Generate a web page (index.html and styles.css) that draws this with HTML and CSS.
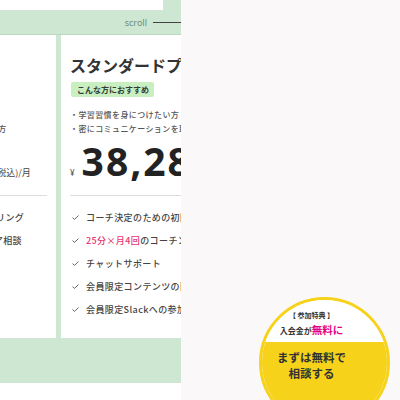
FILE: index.html
```html
<!DOCTYPE html>
<html lang="ja">
<head>
<meta charset="utf-8">
<title>プラン</title>
<link rel="stylesheet" href="styles.css">
</head>
<body>
<div class="page">
  <main class="plans">
    <div class="plans-bg">
      <div class="prev-card"></div>
      <div class="scroll-hint"><span>scroll</span><i class="scroll-line"></i></div>
      <div class="cards">
        <article class="card">
          <h2 class="card-title">ライトプラン</h2>
          <p class="tag">こんな方におすすめ</p>
          <ul class="bullets">
            <li>・まずは気軽に始めたい方</li>
            <li>・自分のペースでしっかり学習を進めたい方</li>
          </ul>
          <div class="price"><span class="yen">¥</span><span class="amount">19,800</span><span class="unit">円(税込)/月</span></div>
          <ul class="features">
            <li><svg class="check" viewBox="0 0 7 5"><polyline points="0.5,2.6 2.5,4.4 6.5,0.5"/></svg><span>コーチ決定のための初回カウンセリング</span></li>
            <li><svg class="check" viewBox="0 0 7 5"><polyline points="0.5,2.6 2.5,4.4 6.5,0.5"/></svg><span>30分×月2回のオンラインキャリア相談</span></li>
            <li><svg class="check" viewBox="0 0 7 5"><polyline points="0.5,2.6 2.5,4.4 6.5,0.5"/></svg><span>チャットサポート</span></li>
            <li><svg class="check" viewBox="0 0 7 5"><polyline points="0.5,2.6 2.5,4.4 6.5,0.5"/></svg><span>会員限定コンテンツ</span></li>
            <li><svg class="check" viewBox="0 0 7 5"><polyline points="0.5,2.6 2.5,4.4 6.5,0.5"/></svg><span>会員限定Slack</span></li>
          </ul>
        </article>
        <article class="card">
          <h2 class="card-title">スタンダードプラン</h2>
          <p class="tag">こんな方におすすめ</p>
          <ul class="bullets">
            <li>・学習習慣を身につけたい方</li>
            <li>・密にコミュニケーションを取りたい方</li>
          </ul>
          <div class="price"><span class="yen">¥</span><span class="amount">38,280</span><span class="unit">円(税込)/月</span></div>
          <ul class="features">
            <li><svg class="check" viewBox="0 0 7 5"><polyline points="0.5,2.6 2.5,4.4 6.5,0.5"/></svg><span>コーチ決定のための初回カウンセリング</span></li>
            <li><svg class="check" viewBox="0 0 7 5"><polyline points="0.5,2.6 2.5,4.4 6.5,0.5"/></svg><span><em class="pink">25分×月4回</em>のコーチング</span></li>
            <li><svg class="check" viewBox="0 0 7 5"><polyline points="0.5,2.6 2.5,4.4 6.5,0.5"/></svg><span>チャットサポート</span></li>
            <li><svg class="check" viewBox="0 0 7 5"><polyline points="0.5,2.6 2.5,4.4 6.5,0.5"/></svg><span>会員限定コンテンツの閲覧</span></li>
            <li><svg class="check" viewBox="0 0 7 5"><polyline points="0.5,2.6 2.5,4.4 6.5,0.5"/></svg><span>会員限定Slackへの参加</span></li>
          </ul>
        </article>
      </div>
    </div>
  </main>
  <aside class="side"></aside>
</div>
<a class="cta" href="#">
  <span class="cta-top">
    <span class="cta-label">【 参加特典 】</span>
    <span class="cta-benefit">入会金が<em>無料に</em></span>
  </span>
  <span class="cta-bottom">まずは無料で<br>相談する</span>
</a>
</body>
</html>
```
FILE: styles.css
```css
html, body {
  margin: 0;
  padding: 0;
}
body {
  background: #faf8f8;
  font-family: "Noto Sans CJK JP", "Noto Sans", sans-serif;
  color: #333;
}
.page {
  display: flex;
  height: 400px;
  overflow: hidden;
}
.plans {
  width: 181px;
  flex-shrink: 0;
  background: #fff;
  overflow: hidden;
}
.side {
  flex: 1;
}
.plans-bg {
  background: #cde7d2;
  padding-bottom: 45px;
}
.prev-card {
  width: 163px;
  height: 10px;
  background: #fff;
}
.scroll-hint {
  height: 24px;
  display: flex;
  align-items: center;
  justify-content: flex-end;
  gap: 6px;
  border-bottom: 1px solid #bdd6c2;
  font-family: "Noto Sans", sans-serif;
  font-size: 9px;
  color: #6f8f77;
}
.scroll-line {
  width: 28px;
  height: 1px;
  background: #444;
}
.cards {
  display: flex;
  gap: 5px;
  margin-left: -170px;
}
.card {
  flex: 0 0 226px;
  box-sizing: border-box;
  background: #fff;
  padding: 18px 9px 17px;
}
.card-title {
  margin: 0;
  font-size: 16px;
  font-weight: 700;
  line-height: 24px;
  color: #333;
  white-space: nowrap;
}
.tag {
  display: block;
  width: fit-content;
  margin: 5px 0 0 1px;
  padding: 0 5px 0 6px;
  background: #c9efc1;
  color: #333d35;
  font-size: 8px;
  font-weight: 700;
  line-height: 15px;
  border-radius: 2px;
}
.bullets {
  margin: 11px 0 0;
  padding: 0;
  list-style: none;
  font-size: 8px;
  font-weight: 500;
  letter-spacing: 0.4px;
  line-height: 14px;
  color: #555;
  white-space: nowrap;
}
.price {
  display: flex;
  align-items: baseline;
  margin-top: 6px;
  white-space: nowrap;
}
.yen {
  font-family: "Noto Sans", sans-serif;
  font-size: 8px;
  color: #555;
  margin-right: 7px;
}
.amount {
  font-family: "Noto Sans", sans-serif;
  font-weight: 700;
  font-size: 39px;
  line-height: 38px;
  letter-spacing: 2px;
  color: #222;
}
.unit {
  font-size: 9px;
  color: #444;
}
.features {
  margin: 15px 0 0;
  padding: 10px 0 0;
  border-top: 1px solid #ddd;
  list-style: none;
}
.features li {
  display: flex;
  align-items: center;
  gap: 7px;
  height: 23px;
  font-size: 9px;
  font-weight: 500;
  letter-spacing: 0.4px;
  color: #444;
  white-space: nowrap;
}
.check {
  width: 7px;
  height: 5px;
  margin-left: 2px;
  flex-shrink: 0;
  fill: none;
  stroke: #666;
  stroke-width: 1;
}
.pink {
  font-style: normal;
  color: #e5376f;
}
.cta {
  position: fixed;
  left: 259px;
  top: 297px;
  width: 131px;
  height: 131px;
  box-sizing: border-box;
  border: 3px solid #f6d21a;
  border-radius: 50%;
  overflow: hidden;
  display: flex;
  flex-direction: column;
  text-decoration: none;
  color: #333;
  font-weight: 700;
  text-align: center;
}
.cta-top {
  display: flex;
  flex-direction: column;
  align-items: center;
  height: 42px;
  box-sizing: border-box;
  padding: 10px 26px 0 0;
  background: #fff;
}
.cta-label {
  font-size: 7px;
  line-height: 10px;
}
.cta-benefit {
  margin-top: 2px;
  font-size: 8px;
  line-height: 15px;
}
.cta-benefit em {
  font-style: normal;
  font-size: 10.5px;
  color: #e4007f;
}
.cta-bottom {
  flex: 1;
  background: #f6d21a;
  padding: 7px 26px 0 0;
  font-size: 11.5px;
  line-height: 16px;
}
```
